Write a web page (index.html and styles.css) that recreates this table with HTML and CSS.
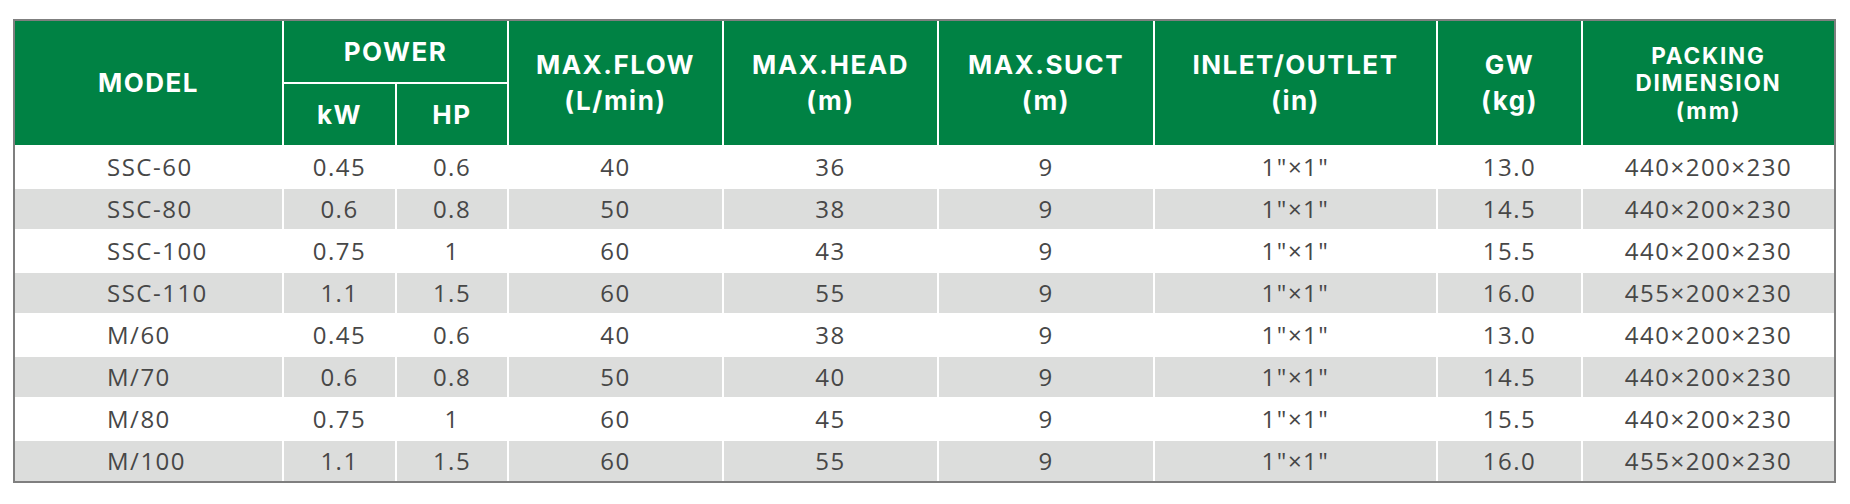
FILE: index.html
```html
<!DOCTYPE html>
<html lang="en">
<head>
<meta charset="utf-8">
<title>Pump specifications</title>
<link rel="stylesheet" href="styles.css">
</head>
<body>
<div class="frame">
  <table class="spec">
    <colgroup>
      <col class="c-model"><col class="c-kw"><col class="c-hp"><col class="c-flow"><col class="c-head"><col class="c-suct"><col class="c-io"><col class="c-gw"><col class="c-pack">
    </colgroup>
    <thead>
      <tr>
        <th rowspan="2">MODEL</th>
        <th colspan="2">POWER</th>
        <th rowspan="2" class="two">MAX.FLOW<br>(L/min)</th>
        <th rowspan="2" class="two">MAX.HEAD<br>(m)</th>
        <th rowspan="2" class="two">MAX.SUCT<br>(m)</th>
        <th rowspan="2" class="two">INLET/OUTLET<br>(in)</th>
        <th rowspan="2" class="two">GW<br>(kg)</th>
        <th rowspan="2" class="three">PACKING<br>DIMENSION<br>(mm)</th>
      </tr>
      <tr>
        <th>kW</th>
        <th>HP</th>
      </tr>
    </thead>
    <tbody>
      <tr><td class="model">SSC-60</td><td>0.45</td><td>0.6</td><td>40</td><td>36</td><td>9</td><td>1"×1"</td><td>13.0</td><td>440×200×230</td></tr>
      <tr class="alt"><td class="model">SSC-80</td><td>0.6</td><td>0.8</td><td>50</td><td>38</td><td>9</td><td>1"×1"</td><td>14.5</td><td>440×200×230</td></tr>
      <tr><td class="model">SSC-100</td><td>0.75</td><td>1</td><td>60</td><td>43</td><td>9</td><td>1"×1"</td><td>15.5</td><td>440×200×230</td></tr>
      <tr class="alt"><td class="model">SSC-110</td><td>1.1</td><td>1.5</td><td>60</td><td>55</td><td>9</td><td>1"×1"</td><td>16.0</td><td>455×200×230</td></tr>
      <tr><td class="model">M/60</td><td>0.45</td><td>0.6</td><td>40</td><td>38</td><td>9</td><td>1"×1"</td><td>13.0</td><td>440×200×230</td></tr>
      <tr class="alt"><td class="model">M/70</td><td>0.6</td><td>0.8</td><td>50</td><td>40</td><td>9</td><td>1"×1"</td><td>14.5</td><td>440×200×230</td></tr>
      <tr><td class="model">M/80</td><td>0.75</td><td>1</td><td>60</td><td>45</td><td>9</td><td>1"×1"</td><td>15.5</td><td>440×200×230</td></tr>
      <tr class="alt"><td class="model">M/100</td><td>1.1</td><td>1.5</td><td>60</td><td>55</td><td>9</td><td>1"×1"</td><td>16.0</td><td>455×200×230</td></tr>
    </tbody>
  </table>
</div>
</body>
</html>
```
FILE: styles.css
```css
html, body {
  margin: 0;
  padding: 0;
  background: #ffffff;
}

.frame {
  margin: 19px 0 0 13px;
  width: 1819px;
  border: 2px solid #7f7f7f;
  overflow: hidden;
}

.spec {
  margin: -2px;
  width: 1823px;
  table-layout: fixed;
  border-collapse: separate;
  border-spacing: 2px;
  background: #ffffff;
}

.c-model { width: 267px; }
.c-kw { width: 111px; }
.c-hp { width: 110px; }
.c-flow { width: 213px; }
.c-head { width: 213px; }
.c-suct { width: 214px; }
.c-io { width: 281px; }
.c-gw { width: 143px; }
.c-pack { width: 251px; }

.spec th,
.spec td {
  padding: 0;
  text-align: center;
  vertical-align: middle;
}

.spec thead tr {
  height: 61px;
}

.spec th {
  background: #008244;
  color: #ffffff;
  font-family: Inter, "Liberation Sans", sans-serif;
  font-weight: 700;
  font-size: 26px;
  line-height: 32px;
  letter-spacing: 1.5px;
}

.spec th.two {
  line-height: 36px;
}

.spec th.three {
  font-size: 22.5px;
  line-height: 27.5px;
  letter-spacing: 1.8px;
}

.spec td {
  height: 40px;
  font-family: "Open Sans", "Noto Sans", sans-serif;
  font-weight: 400;
  font-size: 24px;
  line-height: 28px;
  letter-spacing: 1.5px;
  color: #474747;
  background: #ffffff;
}

.spec tr.alt td {
  background: #dcdddc;
}

.spec td.model {
  text-align: left;
  padding-left: 92px;
}
```
